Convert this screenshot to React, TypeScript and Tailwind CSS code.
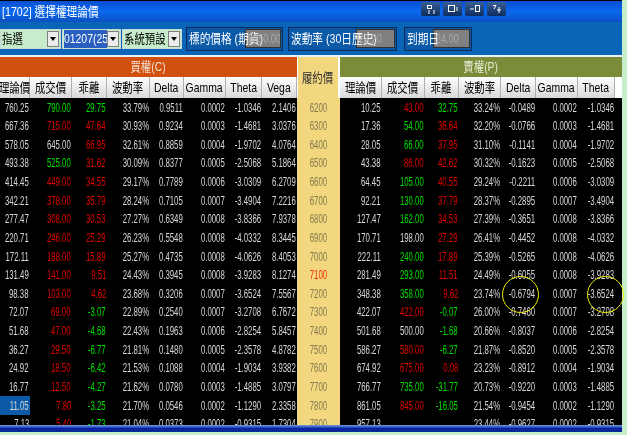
const L = [
["760.25","790.00","29.75","33.79%","0.9511","0.0002","-1.0346","2.1406","6200","10.25","43.00","32.75","33.24%","-0.0489","0.0002","-1.0346","ggrgrr"],
["667.36","715.00","47.64","30.93%","0.9234","0.0003","-1.4681","3.0376","6300","17.36","54.00","36.64","32.20%","-0.0766","0.0003","-1.4681","rrgr"],
["578.05","645.00","66.95","32.61%","0.8859","0.0004","-1.9702","4.0764","6400","28.05","66.00","37.95","31.10%","-0.1141","0.0004","-1.9702","wrgr"],
["493.38","525.00","31.62","30.09%","0.8377","0.0005","-2.5068","5.1864","6500","43.38","86.00","42.62","30.32%","-0.1623","0.0005","-2.5068","grrr"],
["414.45","449.00","34.55","29.17%","0.7789","0.0006","-3.0309","6.2709","6600","64.45","105.00","40.55","29.24%","-0.2211","0.0006","-3.0309","rrgr"],
["342.21","378.00","35.79","28.24%","0.7105","0.0007","-3.4904","7.2216","6700","92.21","130.00","37.79","28.37%","-0.2895","0.0007","-3.4904","rrgr"],
["277.47","308.00","30.53","27.27%","0.6349","0.0008","-3.8366","7.9378","6800","127.47","162.00","34.53","27.39%","-0.3651","0.0008","-3.8366","rrgr"],
["220.71","246.00","25.29","26.23%","0.5548","0.0008","-4.0332","8.3445","6900","170.71","198.00","27.29","26.41%","-0.4452","0.0008","-4.0332","rrwr"],
["172.11","188.00","15.89","25.27%","0.4735","0.0008","-4.0626","8.4053","7000","222.11","240.00","17.89","25.39%","-0.5265","0.0008","-4.0626","rrgr"],
["131.49","141.00","9.51","24.43%","0.3945","0.0008","-3.9283","8.1274","7100","281.49","293.00","11.51","24.49%","-0.6055","0.0008","-3.9283","rrgr"],
["98.38","103.00","4.62","23.68%","0.3206","0.0007","-3.6524","7.5567","7200","348.38","358.00","9.62","23.74%","-0.6794","0.0007","-3.6524","rrgr"],
["72.07","69.00","-3.07","22.89%","0.2540","0.0007","-3.2708","6.7672","7300","422.07","422.00","-0.07","26.00%","-0.7460","0.0007","-3.2708","rgrg"],
["51.68","47.00","-4.68","22.43%","0.1963","0.0006","-2.8254","5.8457","7400","501.68","500.00","-1.68","20.66%","-0.8037","0.0006","-2.8254","rgwg"],
["36.27","29.50","-6.77","21.81%","0.1480","0.0005","-2.3578","4.8782","7500","586.27","580.00","-6.27","21.87%","-0.8520","0.0005","-2.3578","rgrg"],
["24.92","18.50","-6.42","21.53%","0.1088","0.0004","-1.9034","3.9382","7600","674.92","675.00","0.08","23.23%","-0.8912","0.0004","-1.9034","rgrr"],
["16.77","12.50","-4.27","21.62%","0.0780","0.0003","-1.4885","3.0797","7700","766.77","735.00","-31.77","20.73%","-0.9220","0.0003","-1.4885","rggg"],
["11.05","7.80","-3.25","21.70%","0.0546","0.0002","-1.1290","2.3358","7800","861.05","845.00","-16.05","21.54%","-0.9454","0.0002","-1.1290","rgrg"],
["7.13","5.40","-1.73","21.04%","0.0373","0.0002","-0.9315","1.7304","7900","957.13","","","23.44%","-0.9627","0.0002","-0.9315","rgww"],
];
const color: Record<string,string> = { g: "text-[#00e000]", r: "text-[#e00000]", w: "text-[#d8d8d8]" };
const LW = [30,42,35,43,34,42,36,35];
const RW = [42,43,34,42,35,42,37];

function T({ children, className = "" }: { children?: React.ReactNode; className?: string }) {
  return <span className={"inline-block whitespace-nowrap origin-right scale-x-[0.6] " + className}>{children}</span>;
}
function Head({ w, children }: { w: number; children: React.ReactNode }) {
  return (
    <div style={{ width: w }} className="shrink-0 h-full flex items-center justify-center overflow-visible bg-gradient-to-b from-white to-[#d8d8d8] border-r border-[#b0b0b0] text-black text-[13px]">
      <span className="inline-block whitespace-nowrap scale-x-[0.8] origin-center">{children}</span>
    </div>
  );
}
function Cell({ w, c = "text-[#d8d8d8]", children, sel }: { w: number; c?: string; children?: React.ReactNode; sel?: boolean }) {
  return (
    <div style={{ width: w }} className={"shrink-0 h-full flex items-center justify-end pr-px " + c + (sel ? " bg-[#0a5aa8]" : "")}>
      <T>{children}</T>
    </div>
  );
}
function Combo({ w, children, sel }: { w: number; children: React.ReactNode; sel?: boolean }) {
  return (
    <div style={{ width: w }} className={"h-[20px] flex items-center border border-[#c8d8d8] text-[13px] text-black overflow-hidden " + (sel ? "bg-[#c6eccb]" : "bg-[#c6eccb]")}>
      <div className="flex-1 min-w-0 h-full flex items-center overflow-hidden pl-px">
        <span className={"inline-block whitespace-nowrap origin-left scale-x-[0.8] " + (sel ? "bg-[#2a5fc0] text-white" : "")}>{children}</span>
      </div>
      <div className="w-[12px] h-[16px] shrink-0 mr-px bg-[#ececec] border border-[#808080] flex items-center justify-center">
        <div className="w-0 h-0 border-l-[3px] border-r-[3px] border-t-[4px] border-l-transparent border-r-transparent border-t-black" />
      </div>
    </div>
  );
}
function Field({ label, value, inputW, labelW, w }: { label: string; value: string; inputW: number; labelW: number; w: number }) {
  return (
    <div style={{ width: w }} className="h-[24px] flex items-center justify-between pl-[2px] pr-[1px] bg-[#0a5aa8] border border-[#0a2a5a] text-white text-[13px]">
      <div style={{ width: labelW }} className="flex justify-start overflow-visible">
        <span className="inline-block whitespace-nowrap origin-left scale-x-[0.82]">{label}</span>
      </div>
      <div style={{ width: inputW }} className="h-[19px] bg-[#808080] border border-[#303030] text-[#a8a8a8] flex items-center pl-[2px] overflow-hidden">
        <span className="inline-block whitespace-nowrap origin-left scale-x-[0.7]">{value}</span>
      </div>
    </div>
  );
}
function Btn({ children }: { children: React.ReactNode }) {
  return <div className="w-[19px] h-[14px] rounded-[2px] bg-gradient-to-b from-[#3a5f96] to-[#0c2d5e] flex items-center justify-center">{children}</div>;
}

export default function App() {
  return (
    <div className="w-[627px] h-[435px] relative overflow-hidden bg-[#c6eccb] flex flex-col font-['Liberation_Sans','Noto_Sans_CJK_TC',sans-serif] blur-[0.3px]">
      <div className="w-[622px] h-[432px] flex flex-col shrink-0 bg-black">
        {/* title bar */}
        <div className="h-[22px] shrink-0 border-t border-black bg-gradient-to-b from-[#0a4fd0] via-[#0a6af0] to-[#0a4fc0] flex items-center pl-[2px] text-white text-[13px]">
          <span className="inline-block whitespace-nowrap origin-left scale-x-[0.82]">[1702] 選擇權理論價</span>
          <div className="ml-auto mr-[116px] flex gap-[3px] -mt-[6px]">
            <Btn><svg width="12" height="10" viewBox="0 0 12 10" fill="none" stroke="#fff"><rect x="2.5" y="1.5" width="4" height="3"/><path d="M3 7h2M3 9h2M8 7h2M8 9h2"/></svg></Btn>
            <Btn><svg width="12" height="10" viewBox="0 0 12 10" fill="none" stroke="#fff"><rect x="1.5" y="1.5" width="6" height="6"/><path d="M9 4h2M9 6h2"/></svg></Btn>
            <Btn><svg width="12" height="10" viewBox="0 0 12 10" fill="none" stroke="#fff"><path d="M1 5h4"/><rect x="6.5" y="1.5" width="4" height="6"/></svg></Btn>
            <Btn><svg width="12" height="10" viewBox="0 0 12 10" fill="none" stroke="#fff"><path d="M2 1.5h3L3 5M8 3v6M6 6h4"/></svg></Btn>
          </div>
        </div>
        {/* toolbar */}
        <div className="h-[35px] shrink-0 bg-[#0a64b8] border-b-2 border-[#e8f0f8] flex items-center gap-[1px] text-[13px]">
          <Combo w={61}>指選</Combo>
          <Combo w={59} sel>01207(25天)</Combo>
          <Combo w={60}>系統預設</Combo>
          <div className="w-[2px]" />
          <Field label="標的價格 (期貨)" value="6950.00" inputW={39} labelW={56} w={97} />
          <div className="w-[3px]" />
          <Field label="波動率 (30日歷史)" value="23.20" inputW={39} labelW={56} w={109} />
          <div className="w-[5px]" />
          <Field label="到期日" value="24.00" inputW={38} labelW={26} w={68} />
        </div>
        {/* table */}
        <div className="flex-1 min-h-0 flex flex-col overflow-hidden">
          <div className="h-[41px] shrink-0 flex bg-white">
            <div className="w-[297px] shrink-0 flex flex-col">
              <div className="h-[20px] bg-[#d2500e] text-[#f0e0d0] text-[13px] flex items-center justify-center"><span className="inline-block scale-x-[0.8]">買權(C)</span></div>
              <div className="flex-1 flex overflow-hidden">
                {["理論價","成交價","乖離","波動率","Delta","Gamma","Theta","Vega"].map((h, i) => <Head key={h} w={LW[i]}>{h}</Head>)}
              </div>
            </div>
            <div className="w-[43px] shrink-0 bg-[#f3d77f] text-[#303030] text-[13px] flex items-center justify-center border-l border-white border-r-2">
              <span className="inline-block whitespace-nowrap scale-x-[0.8]">履約價</span>
            </div>
            <div className="flex-1 min-w-0 flex flex-col">
              <div className="h-[20px] bg-[#7a8b3a] text-[#e8ecd0] text-[13px] flex items-center justify-center"><span className="inline-block scale-x-[0.8]">賣權(P)</span></div>
              <div className="flex-1 flex overflow-hidden">
                {["理論價","成交價","乖離","波動率","Delta","Gamma","Theta"].map((h, i) => <Head key={h} w={RW[i]}>{h}</Head>)}
              </div>
            </div>
          </div>
          <div className="flex-1 min-h-0 overflow-hidden text-[13px]">
            {L.map((r, ri) => (
              <div key={r[8]} className="flex h-[18.63px]">
                {r.slice(0, 8).map((v, i) => (
                  <Cell key={i} w={LW[i]} sel={ri === 16 && i === 0}
                    c={i === 1 ? color[r[16][0]] : i === 2 ? color[r[16][1]] : "text-[#d8d8d8]"}>{v}</Cell>
                ))}
                <div className={"w-[43px] shrink-0 h-full bg-[#f3d77f] flex items-center justify-center " + (r[8] === "7100" ? "text-[#f03000]" : "text-[#807850]")}>
                  <span className="inline-block scale-x-[0.6]">{r[8]}</span>
                </div>
                {r.slice(9, 16).map((v, i) => (
                  <Cell key={i} w={RW[i]}
                    c={i === 1 ? color[r[16][2]] : i === 2 ? color[r[16][3]] : "text-[#d8d8d8]"}>{v}</Cell>
                ))}
              </div>
            ))}
          </div>
        </div>
        {/* bottom scrollbar */}
        <div className="h-[7px] shrink-0 bg-gradient-to-b from-[#7c9cd8] via-[#0a20a8] to-[#0a2a90]" />
      </div>
      {/* annotation circles */}
      <div className="absolute left-[502px] top-[276px] w-[37px] h-[37px] rounded-full border border-[#f0f000]" />
      <div className="absolute left-[587px] top-[276px] w-[37px] h-[37px] rounded-full border border-[#f0f000]" />
    </div>
  );
}
